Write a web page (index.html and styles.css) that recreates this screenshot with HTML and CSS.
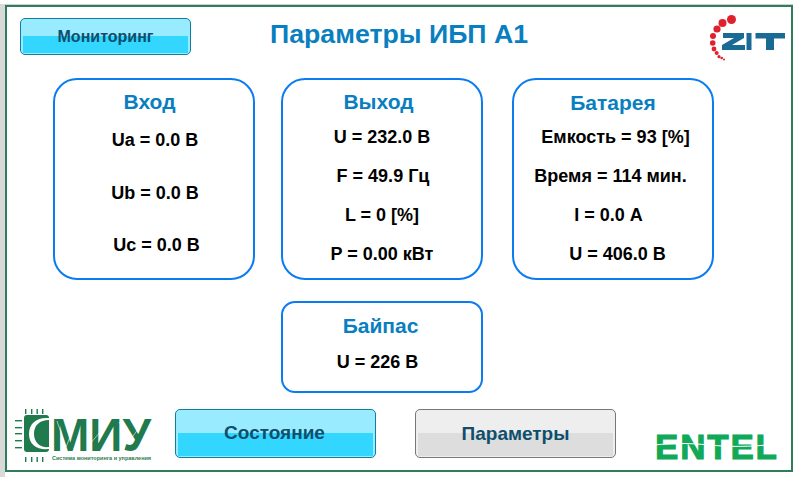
FILE: index.html
```html
<!DOCTYPE html>
<html lang="ru">
<head>
  <meta charset="UTF-8" />
  <title>Параметры ИБП А1</title>
  <link rel="stylesheet" href="styles.css">
</head>
<body>
  <div class="screen">
    <header class="top">
      <button class="btn btn-small btn-blue">Мониторинг</button>
      <h1>Параметры ИБП А1</h1>
      <svg class="zit" viewBox="0 0 78 48" width="78" height="48">
        <g fill="#e0202c">
          <circle cx="23.5" cy="5.5" r="4.5"/><circle cx="14.5" cy="9" r="4"/><circle cx="9" cy="15" r="3.6"/>
          <circle cx="5" cy="22" r="3"/><circle cx="4.7" cy="29" r="2.8"/><circle cx="6" cy="35" r="2.4"/>
          <circle cx="8.7" cy="39" r="2"/><circle cx="11" cy="42.7" r="1.6"/><circle cx="13.7" cy="44" r="1.3"/><circle cx="16" cy="45.5" r="1"/>
        </g>
        <g fill="#1a6a96">
          <polygon points="15,19 36,19 36,24 24,31 37,31 37,36 14,36 14,31 26,24 15,24"/>
          <rect x="38.500" y="19" width="5" height="17"/>
          <rect x="47.500" y="19" width="29.500" height="5.500"/>
          <rect x="58" y="19" width="8" height="17"/>
        </g>
      </svg>
    </header>

    <main class="cards">
      <section class="card">
        <h2 class="back-4">Вход</h2>
        <div class="rows rows-in">
          <p class="right-1">Ua = 0.0 В</p>
          <p class="right-1">Ub = 0.0 В</p>
          <p class="right-3">Uc = 0.0 В</p>
        </div>
      </section>
      <section class="card">
        <h2 class="back-3">Выход</h2>
        <div class="rows">
          <p>U = 232.0 В</p>
          <p class="right-1">F = 49.9 Гц</p>
          <p>L = 0 [%]</p>
          <p>P = 0.00 кВт</p>
        </div>
      </section>
      <section class="card">
        <h2 class="title-low">Батарея</h2>
        <div class="rows">
          <p class="right-3">Емкость = 93 [%]</p>
          <p class="back-2">Время = 114 мин.</p>
          <p class="back-4">I = 0.0 А</p>
          <p class="right-5">U = 406.0 В</p>
        </div>
      </section>
      <section class="card card-short">
        <h2 class="back-1">Байпас</h2>
        <div class="rows rows-short">
          <p class="back-4">U = 226 В</p>
        </div>
      </section>
    </main>

    <footer class="bottom">
      <div class="smiu">
        <svg class="chip" viewBox="0 0 37 53" width="37" height="53">
          <g fill="#1f7a4d">
            <rect x="11" y="0" width="1.4" height="5"/><rect x="17" y="0" width="1.4" height="5"/><rect x="22.500" y="0" width="1.4" height="5"/><rect x="28" y="0" width="1.4" height="5"/>
            <rect x="11" y="48" width="1.4" height="5"/><rect x="17" y="48" width="1.4" height="5"/><rect x="22.500" y="48" width="1.4" height="5"/><rect x="28" y="48" width="1.4" height="5"/>
            <rect x="1" y="11" width="7" height="1.4"/><rect x="1" y="18" width="7" height="1.4"/><rect x="1" y="24" width="7" height="1.4"/><rect x="1" y="31" width="7" height="1.4"/><rect x="1" y="38" width="7" height="1.4"/>
            <rect x="10" y="6" width="25" height="37" rx="3"/>
          </g>
          <path d="M35 9 C23 8 15 14 15 25 C15 36 23 41 35 40 L35 38 C27 39 20 34 20 25 C20 16 26 11 35 11Z" fill="#fff"/>
        </svg>
        <div class="smiu-text">
          <span class="smiu-name">МИУ</span>
          <span class="smiu-sub">Система мониторинга и управления</span>
          <svg class="smiu-lines" viewBox="0 0 98 34" width="98" height="34">
            <path d="M6 4 L15 30 L25 5 M38 28 L57 6 M68 5 L80 22 L92 5" fill="none" stroke="#fff" stroke-width="0.8" opacity="0.7"/>
          </svg>
        </div>
      </div>
      <button class="btn btn-big btn-blue btn-state">Состояние</button>
      <button class="btn btn-big btn-gray">Параметры</button>
      <div class="entel">
        ENTEL
        <svg class="entel-cut" viewBox="0 0 124 6" width="124" height="6">
          <path d="M0 3 C20 1 35 1 55 3 S95 5 124 2" fill="none" stroke="#fff" stroke-width="1"/>
        </svg>
      </div>
    </footer>
  </div>
</body>
</html>
```

FILE: styles.css
```css
* {
  box-sizing: border-box;
}
html, body {
  margin: 0;
}
body {
  background: linear-gradient(#d9d9d9, #d9d9d9) no-repeat 0 4px / 5px 100%, #fff;
  padding: 5px;
  font-family: 'Liberation Sans', Arial, sans-serif;
  width: 798px;
  height: 477px;
  overflow: hidden;
}
.screen {
  width: 788px;
  height: 467px;
  border: 2px solid #2f7d5b;
  box-shadow: 0 -1px 0 #cfcfcf;
  display: flex;
  flex-direction: column;
}
.top {
  display: flex;
  align-items: flex-start;
  height: 71px;
  padding: 7px 5px 0 13px;
}
h1 {
  flex: 1;
  margin: 4px 0 0 79px;
  font-size: 26.7px;
  line-height: 33px;
  font-weight: bold;
  color: #0a7fc0;
  white-space: nowrap;
}
.btn {
  border-radius: 5px;
  border: 1px solid #0e7f9c;
  font-family: inherit;
  font-weight: bold;
  color: #0d4f6c;
  padding: 0;
  cursor: pointer;
}
.btn-blue {
  background: linear-gradient(#33d6ff, #33d6ff) no-repeat center bottom 1px / calc(100% - 4px) 49%, #99ebff;
}
.btn-gray {
  border-color: #777;
  background: linear-gradient(#dddddd, #dddddd) no-repeat center bottom 1px / calc(100% - 4px) 49%, #eeeeee;
}
.btn-small {
  width: 171px;
  height: 37px;
  margin-top: 4px;
  font-size: 16px;
}
.btn-big {
  width: 201px;
  height: 49px;
  font-size: 19px;
}
.btn-state {
  padding: 0 2px 2px 0;
}
.cards {
  display: grid;
  grid-template-columns: 228px 231px 202px;
  grid-template-rows: 202px 92px;
  row-gap: 21px;
  padding-left: 46px;
}
.card {
  width: 202px;
  border: 2px solid #0a7cf0;
  border-radius: 24px;
  text-align: center;
  padding-top: 10px;
}
.card-short {
  grid-column: 2;
  border-radius: 14px;
  padding-top: 11px;
}
h2 {
  margin: 0 0 13px;
  font-size: 21px;
  line-height: 24px;
  font-weight: bold;
  color: #0a7fc0;
}
.title-low {
  margin: 1px 0 12px;
}
.rows {
  display: flex;
  flex-direction: column;
  gap: 18px;
}
.rows-in {
  gap: 31.5px;
  padding-top: 3px;
}
.rows-short {
  padding-top: 1px;
}
.rows p {
  margin: 0;
  font-size: 18px;
  line-height: 21px;
  font-weight: bold;
  color: #000;
}
/* подписи на экране стоят не по центру, как в оригинале */
.right-1 {
  padding-left: 2px;
}
.right-3 {
  padding-left: 5px;
}
.right-5 {
  padding-left: 9px;
}
.back-1 {
  padding-right: 3px;
}
.back-2 {
  padding-right: 5px;
}
.back-3 {
  padding-right: 7px;
}
.back-4 {
  padding-right: 9px;
}
.bottom {
  display: flex;
  align-items: flex-start;
  padding-left: 7px;
  margin-top: 16px;
}
.smiu {
  display: flex;
  width: 161px;
}
.smiu-text {
  position: relative;
  display: flex;
  flex-direction: column;
  padding-top: 6px;
}
.smiu-name {
  font-size: 46px;
  line-height: 40px;
  font-weight: bold;
  color: #1f7a4d;
}
.smiu-sub {
  font-size: 5.5px;
  line-height: 7px;
  margin-left: 1px;
  font-weight: bold;
  color: #2f7a50;
  white-space: nowrap;
}
.smiu-lines {
  position: absolute;
  left: 0;
  top: 8px;
}
.btn-big + .btn-big {
  margin-left: 39px;
}
.entel {
  position: relative;
  margin: 22px 0 0 39px;
  font-size: 35px;
  line-height: 32px;
  font-weight: bold;
  letter-spacing: 1.8px;
  color: #0fa958;
  -webkit-text-stroke: 1px #0fa958;
}
.entel-cut {
  position: absolute;
  left: -1px;
  top: 11px;
}
```
